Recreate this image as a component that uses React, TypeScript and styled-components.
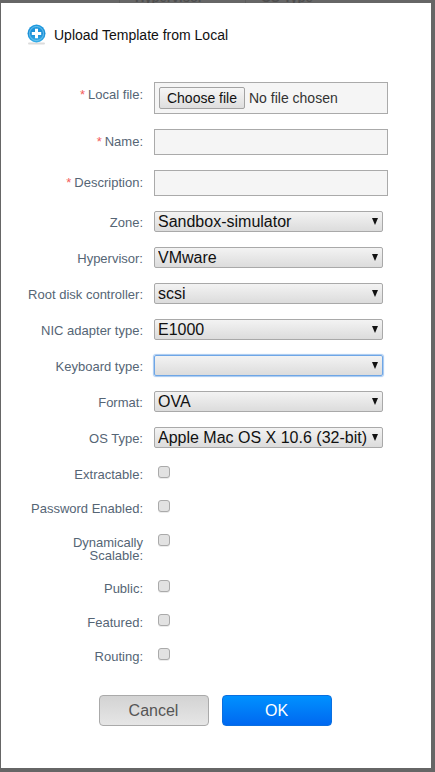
import styled, { createGlobalStyle } from 'styled-components'

const GlobalStyle = createGlobalStyle`
  html, body {
    margin: 0;
    height: 100%;
    overflow: hidden;
    background: #666;
    font-family: "Liberation Sans", Arial, sans-serif;
  }
`

const Backdrop = styled.div`
  position: relative;
  width: 435px;
  height: 772px;
  padding: 3px 4px 4px 1px;
  box-sizing: border-box;
  background: #666;
  overflow: hidden;
`

const BehindLabel = styled.span<{ $left: number }>`
  position: absolute;
  top: -9px;
  left: ${(p) => p.$left}px;
  font-size: 13px;
  line-height: 13px;
  font-weight: bold;
  color: #4e4e4e;
`

const BehindLine = styled.span<{ $left: number }>`
  position: absolute;
  top: 0;
  left: ${(p) => p.$left}px;
  width: 1px;
  height: 3px;
  background: #5c5c5c;
`

const Dialog = styled.div`
  position: relative;
  width: 430px;
  height: 765px;
  background: #fff;
`

const Header = styled.div`
  display: flex;
  align-items: center;
  height: 36px;
  padding: 13px 0 0 26px;
`

const Title = styled.h1`
  margin: 1px 0 0 8px;
  font-size: 14px;
  font-weight: normal;
  color: #111;
`

const Form = styled.form`
  padding-top: 30px;
`

const Row = styled.div<{ $height: number }>`
  display: grid;
  grid-template-columns: 142px 1fr;
  column-gap: 11px;
  height: ${(p) => p.$height}px;
  align-items: start;
`

const Label = styled.label<{ $top: number }>`
  padding: ${(p) => p.$top}px 0 0 26px;
  font-size: 13px;
  line-height: 13px;
  text-align: right;
  color: #556575;
`

const Required = styled.span`
  margin-right: 3px;
  color: #f45c5c;
`

const FileBox = styled.div`
  display: flex;
  align-items: center;
  box-sizing: border-box;
  width: 234px;
  height: 32px;
  padding-left: 4px;
  border: 1px solid #aaa;
  background: #f5f5f5;
`

const FileButton = styled.button`
  box-sizing: border-box;
  width: 86px;
  height: 22px;
  padding: 0;
  border: 1px solid #a3a3a3;
  border-radius: 2px;
  background: linear-gradient(#f6f6f6, #dedede);
  font-family: "Liberation Sans", Arial, sans-serif;
  font-size: 14px;
  color: #111;
`

const FileName = styled.span`
  margin-left: 4px;
  font-size: 14px;
  color: #333;
`

const TextInput = styled.input`
  display: block;
  box-sizing: border-box;
  width: 234px;
  height: 26px;
  padding: 0 4px;
  border: 1px solid #aaa;
  background: #f5f5f5;
  outline: none;
`

const SelectWrap = styled.div`
  position: relative;
  width: 229px;
  height: 21px;
  &::after {
    content: "";
    position: absolute;
    top: 7px;
    right: 5px;
    border-style: solid;
    border-width: 7px 3.5px 0;
    border-color: #111 transparent transparent;
  }
`

const Select = styled.select<{ $focused?: boolean }>`
  appearance: none;
  display: block;
  box-sizing: border-box;
  width: 229px;
  height: 21px;
  padding: 0 14px 0 3px;
  border: 1px solid ${(p) => (p.$focused ? '#6ea6e6' : '#a9a9a9')};
  border-radius: 2px;
  outline: none;
  box-shadow: ${(p) => (p.$focused ? '0 0 1px 1px #a6c8f0' : 'none')};
  background: linear-gradient(#f3f3f3, #dcdcdc);
  font-family: "Liberation Sans", Arial, sans-serif;
  font-size: 16px;
  color: #111;
`

const CheckList = styled.div`
  margin-top: 3px;
`

const Checkbox = styled.input`
  appearance: none;
  display: block;
  box-sizing: border-box;
  width: 12px;
  height: 12px;
  margin: 0 0 0 4px;
  border: 1px solid #aaa;
  border-radius: 3px;
  background: #e2e2e2;
  box-shadow: 0 1px 0 #ececec;
`

const Actions = styled.div`
  display: flex;
  justify-content: center;
  gap: 13px;
  margin-top: 13px;
  padding-right: 2px;
`

const Button = styled.button<{ $primary?: boolean }>`
  box-sizing: border-box;
  width: 110px;
  height: 31px;
  border: 1px solid ${(p) => (p.$primary ? '#0a6fe0' : '#aaa')};
  border-radius: 4px;
  background: ${(p) =>
    p.$primary ? 'linear-gradient(#0091ff, #0068f0)' : 'linear-gradient(#d3d3d3, #e6e6e6)'};
  font-family: "Liberation Sans", Arial, sans-serif;
  font-size: 16px;
  color: ${(p) => (p.$primary ? '#fff' : '#555')};
`

const PlusIcon = () => (
  <svg width="19" height="21" viewBox="0 0 19 21">
    <defs>
      <linearGradient id="plusFill" x1="0" y1="0" x2="0" y2="1">
        <stop offset="0" stopColor="#1f9be0" />
        <stop offset="0.5" stopColor="#1b8fd6" />
        <stop offset="1" stopColor="#36b0ea" />
      </linearGradient>
    </defs>
    <rect x="1" y="18.5" width="17" height="2" rx="1" fill="#dcdcdc" />
    <circle cx="9.5" cy="9.5" r="9" fill="url(#plusFill)" />
    <circle cx="9.5" cy="9.5" r="7" fill="none" stroke="#8fd2f2" strokeWidth="0.7" />
    <path d="M8 4.8h3v3.2h3.2v3H11v3.2H8V11H4.8V8H8z" fill="#fff" />
  </svg>
)

const selects = [
  { label: 'Zone:', value: 'Sandbox-simulator' },
  { label: 'Hypervisor:', value: 'VMware' },
  { label: 'Root disk controller:', value: 'scsi' },
  { label: 'NIC adapter type:', value: 'E1000' },
  { label: 'Keyboard type:', value: '', focused: true },
  { label: 'Format:', value: 'OVA' },
  { label: 'OS Type:', value: 'Apple Mac OS X 10.6 (32-bit)' },
]

const checks = [
  { label: 'Extractable:', height: 34 },
  { label: 'Password Enabled:', height: 34 },
  { label: 'Dynamically Scalable:', height: 46 },
  { label: 'Public:', height: 34 },
  { label: 'Featured:', height: 34 },
  { label: 'Routing:', height: 34 },
]

export default function App() {
  return (
    <>
      <GlobalStyle />
      <Backdrop>
        <BehindLine $left={119} />
        <BehindLine $left={245} />
        <BehindLabel $left={135}>Hypervisor</BehindLabel>
        <BehindLabel $left={261}>OS Type</BehindLabel>
        <Dialog>
          <Header>
            <PlusIcon />
            <Title>Upload Template from Local</Title>
          </Header>
          <Form>
            <Row $height={47}>
              <Label $top={6}><Required>*</Required>Local file:</Label>
              <FileBox>
                <FileButton type="button">Choose file</FileButton>
                <FileName>No file chosen</FileName>
              </FileBox>
            </Row>
            <Row $height={41}>
              <Label $top={6}><Required>*</Required>Name:</Label>
              <TextInput type="text" />
            </Row>
            <Row $height={41}>
              <Label $top={6}><Required>*</Required>Description:</Label>
              <TextInput type="text" />
            </Row>
            {selects.map((s) => (
              <Row $height={36} key={s.label}>
                <Label $top={5}>{s.label}</Label>
                <SelectWrap>
                  <Select $focused={s.focused} defaultValue={s.value}>
                    <option value={s.value}>{s.value}</option>
                  </Select>
                </SelectWrap>
              </Row>
            ))}
            <CheckList>
              {checks.map((c) => (
                <Row $height={c.height} key={c.label}>
                  <Label $top={2}>{c.label}</Label>
                  <Checkbox type="checkbox" />
                </Row>
              ))}
            </CheckList>
            <Actions>
              <Button type="button">Cancel</Button>
              <Button type="button" $primary>OK</Button>
            </Actions>
          </Form>
        </Dialog>
      </Backdrop>
    </>
  )
}
